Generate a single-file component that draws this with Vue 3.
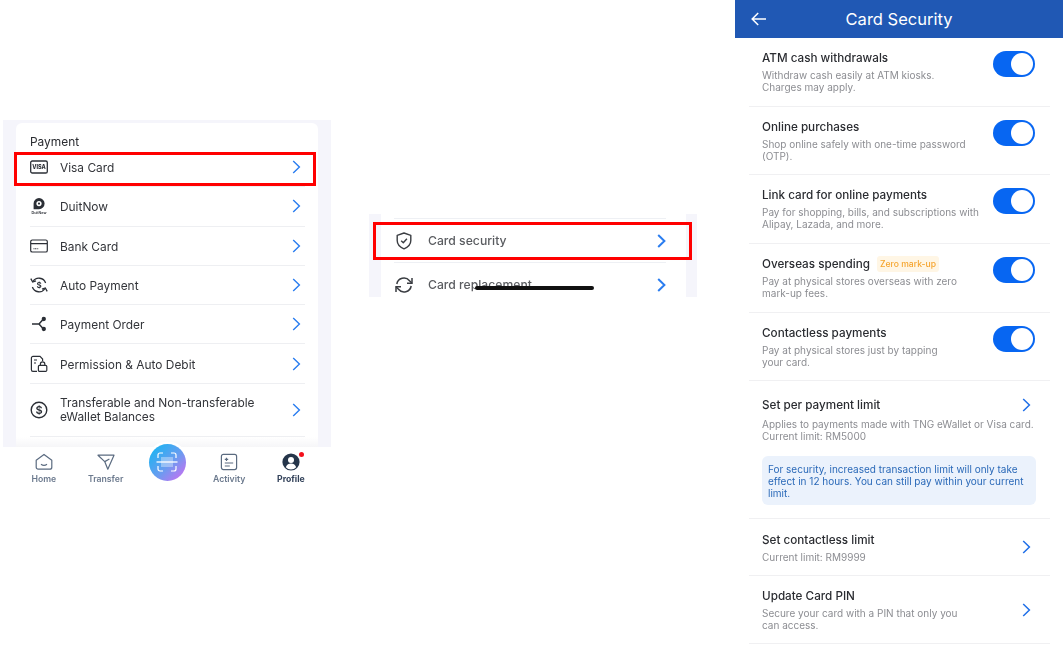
<script setup>
const payRows = [
  { key: 'visa', label: 'Visa Card' },
  { key: 'duit', label: 'DuitNow' },
  { key: 'bank', label: 'Bank Card' },
  { key: 'auto', label: 'Auto Payment' },
  { key: 'order', label: 'Payment Order' },
  { key: 'perm', label: 'Permission & Auto Debit' },
  { key: 'bal', label: 'Transferable and Non-transferable eWallet Balances', tall: true }
]
const toggles = [
  { title: 'ATM cash withdrawals', lines: ['Withdraw cash easily at ATM kiosks.', 'Charges may apply.'] },
  { title: 'Online purchases', lines: ['Shop online safely with one-time password', '(OTP).'] },
  { title: 'Link card for online payments', lines: ['Pay for shopping, bills, and subscriptions with', 'Alipay, Lazada, and more.'] },
  { title: 'Overseas spending', badge: 'Zero mark-up', lines: ['Pay at physical stores overseas with zero', 'mark-up fees.'] },
  { title: 'Contactless payments', lines: ['Pay at physical stores just by tapping', 'your card.'] }
]
</script>

<template>
  <div class="page">
    <section class="phone">
      <div class="card">
        <div class="card-title">Payment</div>
        <div v-for="r in payRows" :key="r.key" class="pay-row" :class="{ tall: r.tall }">
          <span class="pay-icon">
            <svg v-if="r.key === 'visa'" viewBox="0 0 18 14" width="18" height="14">
              <rect x="0.7" y="1" width="16.6" height="12" rx="1.6" fill="none" stroke="#2b2f36" stroke-width="1.3" />
              <text x="9" y="9.2" text-anchor="middle" class="visa-t">VISA</text>
            </svg>
            <svg v-else-if="r.key === 'duit'" viewBox="0 0 18 18" width="18" height="18">
              <path d="M9 1a5.6 5.6 0 0 1 0 11.2H3.6V6.6A5.5 5.5 0 0 1 9 1z" fill="#2b2f36" />
              <circle cx="9" cy="6.6" r="2.6" fill="#fff" />
              <circle cx="9" cy="6.6" r="1.1" fill="#2b2f36" />
              <text x="9" y="17" text-anchor="middle" class="duit-t">DuitNow</text>
            </svg>
            <svg v-else-if="r.key === 'bank'" viewBox="0 0 18 14" width="18" height="14" fill="none" stroke="#2b2f36">
              <rect x="0.7" y="1" width="16.6" height="12" rx="1.6" stroke-width="1.2" />
              <path d="M1 4.6h16" stroke-width="1.2" />
              <path d="M3.5 9.8h5" stroke-width="1.1" stroke-dasharray="1 .6" />
            </svg>
            <svg v-else-if="r.key === 'auto'" viewBox="0 0 18 18" width="18" height="18" fill="none" stroke="#2b2f36" stroke-width="1.3">
              <path d="M3 5.5A7 7 0 0 1 15.6 7" />
              <path d="M.8 2.6 2.7 6l3.3-1.2" />
              <path d="M15 12.5A7 7 0 0 1 2.4 11" />
              <path d="M17.2 15.4 15.3 12 12 13.2" />
              <text x="9" y="11.8" text-anchor="middle" class="dollar-t">$</text>
            </svg>
            <svg v-else-if="r.key === 'order'" viewBox="0 0 18 18" width="18" height="18" fill="none" stroke="#2b2f36" stroke-width="1.5">
              <path d="M2 9h7M9 9l4-4.4M9 9l4 4.4" />
              <circle cx="13.8" cy="4" r="1.4" fill="#2b2f36" />
              <circle cx="13.8" cy="14" r="1.4" fill="#2b2f36" />
            </svg>
            <svg v-else-if="r.key === 'perm'" viewBox="0 0 18 18" width="18" height="18" fill="none" stroke="#2b2f36" stroke-width="1.2">
              <path d="M7 16.4H3a1.6 1.6 0 0 1-1.6-1.6V3A1.6 1.6 0 0 1 3 1.4h7L12.6 4v2" />
              <path d="M4 5h3M4 8h2" />
              <rect x="8.4" y="10.4" width="8.4" height="6" rx="1.2" />
              <path d="M10.4 10.4V9a2.2 2.2 0 0 1 4.4 0v1.4" />
            </svg>
            <svg v-else viewBox="0 0 18 18" width="18" height="18" fill="none" stroke="#2b2f36" stroke-width="1.4">
              <circle cx="9" cy="9" r="7.8" />
              <text x="9" y="12.9" text-anchor="middle" class="dollar-b">$</text>
            </svg>
          </span>
          <span class="pay-label">{{ r.label }}</span>
          <svg class="chev" viewBox="0 0 9 14" width="9" height="14"><path d="M1.2 1 7.4 7l-6.2 6" /></svg>
        </div>
        <div class="fade"></div>
      </div>
      <div class="highlight left-box"></div>
      <nav class="tabs">
        <div class="tab">
          <svg viewBox="0 0 18 18" width="18" height="18" fill="none" stroke="#5b6b80" stroke-width="1.2">
            <path d="M1.2 7.2 9 1.400l7.800 5.800V14.200a2 2 0 0 1-2 2H3.200a2 2 0 0 1-2-2z" stroke-linejoin="round" />
            <path d="M6 11.200q3 2.200 6 0" />
          </svg>
          <span>Home</span>
        </div>
        <div class="tab">
          <svg viewBox="0 0 18 18" width="18" height="18" fill="none" stroke="#5b6b80" stroke-width="1.200" stroke-linejoin="round">
            <path d="M1 2.200h16L10.800 16.200 7.700 8.600z" />
            <path d="M7.700 8.600 12.400 6" />
          </svg>
          <span>Transfer</span>
        </div>
        <div class="tab scan-tab">
          <div class="scan">
            <svg viewBox="0 0 22 22" width="22" height="22" fill="none" stroke="#fff" stroke-width="1.200">
              <path d="M2 7V4a2 2 0 0 1 2-2h3M15 2h3a2 2 0 0 1 2 2v3M20 15v3a2 2 0 0 1-2 2h-3M7 20H4a2 2 0 0 1-2-2v-3" />
              <rect x="5" y="6" width="12" height="10" fill="#fff" opacity=".35" stroke="none" />
              <path d="M0.500 11h21" stroke-width="1.300" />
            </svg>
          </div>
        </div>
        <div class="tab">
          <svg viewBox="0 0 18 18" width="18" height="18" fill="none" stroke="#5b6b80" stroke-width="1.200">
            <rect x="1.400" y="1.400" width="15.200" height="15.200" rx="2" />
            <path d="M4.800 6.400h3.400M6.500 4.700v3.400M4.800 10h8.400M4.800 13h5" />
          </svg>
          <span>Activity</span>
        </div>
        <div class="tab active">
          <span class="avatar">
            <svg viewBox="0 0 18 18" width="18" height="18">
              <circle cx="9" cy="9" r="8.600" fill="#25354a" />
              <circle cx="9" cy="7" r="3" fill="#fff" />
              <path d="M3.800 14.200c1-2.800 3-3.700 5.200-3.700s4.200.9 5.200 3.700a7 7 0 0 1-10.400 0z" fill="#fff" />
            </svg>
            <i class="dot"></i>
          </span>
          <span>Profile</span>
        </div>
      </nav>
    </section>

    <section class="crop">
      <div class="crop-card">
        <div class="crop-row">
          <svg viewBox="0 0 16 18" width="16" height="18" fill="none" stroke="#3a3d42" stroke-width="1.400" stroke-linejoin="round">
            <path d="M8 1 14.800 3.300V8.500c0 4-3 6.700-6.800 8.300C4.200 15.200 1.200 12.500 1.200 8.500V3.300z" />
            <path d="M5.200 8.800 7.300 10.800 10.900 6.800" />
          </svg>
          <span class="crop-label">Card security</span>
          <svg class="chev bold" viewBox="0 0 9 14" width="9" height="14"><path d="M1.200 1 7.400 7l-6.200 6" /></svg>
        </div>
        <div class="crop-row">
          <svg viewBox="0 0 20 18" width="20" height="18" fill="none" stroke="#3a3d42" stroke-width="1.500">
            <path d="M2.800 8A7.200 7.200 0 0 1 15.500 4.800L17.800 7" />
            <path d="M18 2v5.200h-5" />
            <path d="M17.200 10A7.200 7.200 0 0 1 4.500 13.200L2.200 11" />
            <path d="M2 16v-5.200h5" />
          </svg>
          <span class="crop-label">Card replacement</span>
          <svg class="chev bold" viewBox="0 0 9 14" width="9" height="14"><path d="M1.200 1 7.400 7l-6.200 6" /></svg>
        </div>
      </div>
      <div class="highlight mid-box"></div>
      <div class="scribble"></div>
    </section>

    <section class="security">
      <header class="sec-head">
        <svg class="back" viewBox="0 0 16 14" width="16" height="14" fill="none" stroke="#fff" stroke-width="1.500">
          <path d="M15 7H1.500M7.200 1 1.200 7l6 6" />
        </svg>
        <h1>Card Security</h1>
      </header>

      <div v-for="t in toggles" :key="t.title" class="sec-row toggle-row">
        <div class="sec-text">
          <div class="sec-title">{{ t.title }}<span v-if="t.badge" class="badge">{{ t.badge }}</span></div>
          <div v-for="l in t.lines" :key="l" class="sec-desc">{{ l }}</div>
        </div>
        <span class="switch"><i></i></span>
      </div>

      <div class="sec-row limit-row">
        <div class="limit-head">
          <div class="sec-title">Set per payment limit</div>
          <svg class="chev sec-chev" viewBox="0 0 9 14" width="9" height="14"><path d="M1.200 1 7.400 7l-6.200 6" /></svg>
        </div>
        <div class="sec-desc">Applies to payments made with TNG eWallet or Visa card.</div>
        <div class="sec-desc">Current limit: RM5000</div>
        <div class="info">For security, increased transaction limit will only take effect in 12 hours. You can still pay within your current limit.</div>
      </div>

      <div class="sec-row center-row short">
        <div class="sec-text">
          <div class="sec-title">Set contactless limit</div>
          <div class="sec-desc">Current limit: RM9999</div>
        </div>
        <svg class="chev sec-chev" viewBox="0 0 9 14" width="9" height="14"><path d="M1.200 1 7.400 7l-6.200 6" /></svg>
      </div>

      <div class="sec-row center-row">
        <div class="sec-text">
          <div class="sec-title">Update Card PIN</div>
          <div class="sec-desc">Secure your card with a PIN that only you</div>
          <div class="sec-desc">can access.</div>
        </div>
        <svg class="chev sec-chev" viewBox="0 0 9 14" width="9" height="14"><path d="M1.200 1 7.400 7l-6.200 6" /></svg>
      </div>
    </section>
  </div>
</template>

<style scoped>
.page {
  width: 1064px;
  height: 651px;
  box-sizing: border-box;
  padding-left: 3px;
  display: flex;
  align-items: flex-start;
  gap: 38px;
  overflow: hidden;
  background: #fff;
  font-family: Inter, "Liberation Sans", sans-serif;
  color: #2a2c31;
}

/* left phone */
.phone {
  position: relative;
  width: 328px;
  margin-top: 120px;
  flex: none;
  background: #f5f5fb;
  filter: blur(0.4px);
}
.card {
  position: relative;
  height: 324px;
  margin: 3px 13px 0;
  padding: 0 13px 0 14px;
  box-sizing: border-box;
  background: #fff;
  border-radius: 6px 6px 0 0;
  overflow: hidden;
}
.card-title {
  height: 25px;
  padding-top: 11.500px;
  box-sizing: border-box;
  font-size: 11.900px;
  line-height: 14px;
}
.pay-row {
  height: 39.300px;
  box-sizing: border-box;
  display: flex;
  align-items: center;
  border-bottom: 1px solid #eeeff2;
}
.pay-row.tall {
  height: 53px;
}
.pay-icon {
  width: 30px;
  flex: none;
  display: flex;
  align-items: center;
}
.pay-label {
  flex: 1;
  width: 0;
  padding: 2px 30px 0 0;
  font-size: 11.900px;
  line-height: 14px;
  color: #33353a;
}
.pay-row.tall .pay-label {
  padding-top: 1px;
  padding-right: 10px;
}
.fade {
  position: absolute;
  left: 0;
  right: 0;
  bottom: 0;
  height: 10px;
  background: linear-gradient(#ffffff00, #f6f6f8);
}
.visa-t {
  font-size: 5.500px;
  font-weight: 800;
  fill: #2b2f36;
}
.duit-t {
  font-size: 3.600px;
  font-weight: 600;
  fill: #2b2f36;
}
.dollar-t {
  font-size: 8px;
  font-weight: 600;
  fill: #2b2f36;
  stroke: none;
}
.dollar-b {
  font-size: 11px;
  font-weight: 600;
  fill: #2b2f36;
  stroke: none;
}
.chev {
  flex: none;
  margin-right: 4px;
  fill: none;
  stroke: #2a7df0;
  stroke-width: 1.400;
}
.chev.bold {
  stroke-width: 2;
  margin-right: 0;
}
.highlight {
  position: absolute;
  box-sizing: border-box;
  border: 3px solid #f00;
  pointer-events: none;
}
.left-box {
  left: 11px;
  top: 32px;
  width: 302px;
  height: 34px;
}

/* tab bar */
.tabs {
  position: relative;
  height: 43px;
  padding: 0 10px;
  display: grid;
  grid-template-columns: repeat(5, 61.750px);
  background: #fff;
}
.tab {
  display: flex;
  flex-direction: column;
  align-items: center;
  padding-top: 6px;
  gap: 2px;
  font-size: 8.700px;
  line-height: 12px;
  font-weight: 600;
  color: #6c7a8e;
}
.tab.active {
  color: #33425a;
  font-weight: 700;
}
.avatar {
  position: relative;
  display: flex;
}
.dot {
  position: absolute;
  right: -4px;
  top: -1px;
  width: 5px;
  height: 5px;
  border-radius: 50%;
  background: #f4101c;
}
.scan-tab {
  padding-top: 0;
}
.scan {
  width: 37px;
  height: 37px;
  margin-top: -3.500px;
  border-radius: 50%;
  display: flex;
  align-items: center;
  justify-content: center;
  background: linear-gradient(135deg, #1cb4f2 10%, #6a9cf0 55%, #cc6ef2 95%);
  box-shadow: 0 0 0 2.500px #fff;
}

/* middle crop */
.crop {
  position: relative;
  width: 328px;
  height: 83px;
  margin-top: 214px;
  flex: none;
  background: #f5f5fb;
  overflow: hidden;
  filter: blur(0.7px);
}
.crop-card {
  height: 83px;
  margin: 0 11px 0 12px;
  padding: 4px 20px 0 13px;
  background: #fff;
  box-sizing: border-box;
}
.crop-row {
  height: 44px;
  box-sizing: border-box;
  display: flex;
  align-items: center;
  border-top: 1px solid #eef0f4;
}
.crop-row svg:first-child {
  width: 20px;
  flex: none;
  margin-right: 14px;
}
.crop-label {
  flex: 1;
  font-size: 12.200px;
  line-height: 14px;
  font-weight: 500;
  color: #5a5c60;
}
.mid-box {
  left: 4px;
  top: 8px;
  width: 319px;
  height: 38px;
}
.scribble {
  position: absolute;
  left: 106px;
  top: 71.500px;
  width: 119px;
  height: 4px;
  border-radius: 2px;
  background: #111;
}

/* right */
.security {
  width: 328px;
  flex: none;
  filter: blur(0.35px);
}
.sec-head {
  position: relative;
  height: 38px;
  display: flex;
  align-items: center;
  justify-content: center;
  background: #2058b4;
}
.sec-head h1 {
  margin: 0;
  font-size: 16.500px;
  font-weight: 400;
  color: #fff;
}
.back {
  position: absolute;
  left: 16px;
  top: 12px;
}
.sec-row {
  margin: 0 13px 0 14px;
  padding: 12px 15px 0 13px;
  box-sizing: border-box;
  border-bottom: 1.500px solid #f0f0f2;
}
.toggle-row {
  height: 68.700px;
  display: flex;
  justify-content: space-between;
  align-items: flex-start;
}
.sec-title {
  font-size: 11.700px;
  line-height: 16px;
  font-weight: 500;
  color: #2a2c31;
  margin-bottom: 3px;
  display: flex;
  align-items: center;
}
.sec-desc {
  font-size: 10px;
  line-height: 12px;
  color: #8c8d92;
  white-space: nowrap;
}
.badge {
  margin-left: 7px;
  padding: 0 3px;
  height: 16px;
  border-radius: 3px;
  background: #fff6e5;
  color: #f6a52f;
  font-size: 8.600px;
  font-weight: 500;
  line-height: 16px;
}
.switch {
  width: 42px;
  height: 26px;
  margin-top: 1px;
  padding: 2px;
  box-sizing: border-box;
  border-radius: 13px;
  background: #0766f2;
  display: flex;
  justify-content: flex-end;
  flex: none;
}
.switch i {
  width: 22px;
  height: 22px;
  border-radius: 50%;
  background: #fff;
}
.limit-row {
  height: 137.500px;
  padding-top: 16px;
}
.limit-head {
  display: flex;
  justify-content: space-between;
  margin-bottom: 2px;
}
.limit-head .sec-chev {
  margin-top: 1px;
}
.sec-chev {
  margin-right: 4px;
  stroke-width: 1.500;
  stroke: #1f6fe8;
}
.info {
  margin: 14px -1px 0 0;
  padding: 7px 6px 6px 6px;
  background: #ebf2fc;
  border-radius: 6px;
  font-size: 10px;
  line-height: 12px;
  color: #2a69b8;
}
.center-row {
  height: 68px;
  display: flex;
  justify-content: space-between;
  align-items: center;
  padding-top: 1px;
}
.short {
  height: 57px;
}
</style>
